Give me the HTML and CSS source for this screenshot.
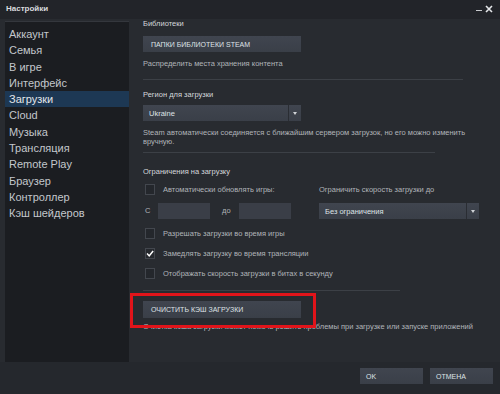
FILE: index.html
```html
<!DOCTYPE html>
<html lang="ru">
<head>
    <meta charset="UTF-8">
    <title>Настройки</title>
    <link rel="stylesheet" href="styles.css">
</head>
<body>

<div class="window">
    <div class="titleBar">
        <span class="title">Настройки</span>
        <div class="windowControls">
            <span class="minimize"></span>
            <svg class="close" width="8" height="8" viewBox="0 0 8 8">
                <path d="M1 1 L7 7 M7 1 L1 7" stroke="#e4e6e9" stroke-width="1.6"/>
            </svg>
        </div>
    </div>

    <div class="mainArea">
        <div class="sidebar">
            <div class="menuItem">Аккаунт</div>
            <div class="menuItem">Семья</div>
            <div class="menuItem">В игре</div>
            <div class="menuItem">Интерфейс</div>
            <div class="menuItem active">Загрузки</div>
            <div class="menuItem">Cloud</div>
            <div class="menuItem">Музыка</div>
            <div class="menuItem">Трансляция</div>
            <div class="menuItem">Remote Play</div>
            <div class="menuItem">Браузер</div>
            <div class="menuItem">Контроллер</div>
            <div class="menuItem">Кэш шейдеров</div>
        </div>

        <div class="panel">
            <p class="heading">Библиотеки</p>
            <button class="steamButton libButton">ПАПКИ БИБЛИОТЕКИ STEAM</button>
            <p class="note libNote">Распределить места хранения контента</p>
            <div class="separator sepWide"></div>

            <p class="heading regionHeading">Регион для загрузки</p>
            <div class="dropdown regionDrop">
                <span class="dropText">Ukraine</span>
                <span class="dropArrow"></span>
            </div>
            <p class="note regionNote">Steam автоматически соединяется с ближайшим сервером загрузок, но его можно изменить<br>вручную.</p>
            <div class="separator sepMid"></div>

            <p class="heading limitHeading">Ограничения на загрузку</p>
            <div class="limitRow">
                <div class="checkRow autoRow">
                    <span class="checkbox"></span>
                    <span class="note">Автоматически обновлять игры:</span>
                </div>
                <span class="note speedLabel">Ограничить скорость загрузки до</span>
            </div>
            <div class="limitRow timeRow">
                <span class="note fromLabel">С</span>
                <span class="timeInput"></span>
                <span class="note toLabel">до</span>
                <span class="timeInput"></span>
                <div class="dropdown speedDrop">
                    <span class="dropText">Без ограничения</span>
                    <span class="dropArrow"></span>
                </div>
            </div>
            <div class="checkRow firstCheck">
                <span class="checkbox"></span>
                <span class="note">Разрешать загрузки во время игры</span>
            </div>
            <div class="checkRow">
                <span class="checkbox checked">
                    <svg width="9" height="9" viewBox="0 0 9 9"><path d="M1.2 4.6 L3.6 7.2 L8 1.6" fill="none" stroke="#ffffff" stroke-width="1.7"/></svg>
                </span>
                <span class="note">Замедлять загрузку во время трансляции</span>
            </div>
            <div class="checkRow">
                <span class="checkbox"></span>
                <span class="note">Отображать скорость загрузки в битах в секунду</span>
            </div>
            <div class="separator sepShort"></div>

            <button class="steamButton cacheButton">ОЧИСТИТЬ КЭШ ЗАГРУЗКИ</button>
            <p class="note cacheNote">Очистка кэша загрузки может помочь решить проблемы при загрузке или запуске приложений</p>

            <div class="highlight"></div>
        </div>
    </div>

    <div class="footer">
        <button class="steamButton footerButton">OK</button>
        <button class="steamButton footerButton">ОТМЕНА</button>
    </div>
</div>

</body>
</html>
```

FILE: styles.css
```css
html, body {
    margin: 0;
    padding: 0;
}

body {
    width: 500px;
    height: 394px;
    overflow: hidden;
    font-family: "Liberation Sans", Arial, sans-serif;
    background-color: #26292e;
}

.window {
    width: 500px;
    height: 394px;
    display: flex;
    flex-direction: column;
    background-color: #282b30;
}

/* заголовок окна */
.titleBar {
    height: 19px;
    display: flex;
    align-items: center;
    justify-content: space-between;
    padding: 0 7px 2px 6px;
    box-sizing: border-box;
    background-color: #222429;
}
.title {
    color: #d9dbde;
    font-size: 8px;
    font-weight: bold;
}
.windowControls {
    display: flex;
    align-items: center;
    gap: 3px;
}
.minimize {
    width: 6px;
    height: 1px;
    margin-top: 4px;
    background-color: #c8cacd;
}

.mainArea {
    display: flex;
    height: 343px;
}

/* левое меню */
.sidebar {
    width: 124px;
    margin: 2px 0 0 5px;
    padding-top: 4px;
    box-sizing: border-box;
    background-color: #1b1d21;
    border-top: 1px solid #34373d;
}
.menuItem {
    height: 16.3px;
    line-height: 16.3px;
    padding-left: 4px;
    color: #c3c7cc;
    font-size: 11px;
}
.menuItem.active {
    background-color: #1d3854;
    color: #e2e6ea;
}

/* правая часть */
.panel {
    position: relative;
    flex: 1;
    padding: 0 0 0 14px;
}
.heading, .note {
    margin: 0;
    font-size: 7.5px;
    line-height: 10px;
}
.heading {
    color: #d5d8dc;
}
.note {
    color: #b0b4b9;
}

.steamButton {
    display: block;
    border: 0;
    padding: 0 0 0 8px;
    text-align: left;
    font-family: "Liberation Sans", Arial, sans-serif;
    font-size: 7px;
    color: #dfe2e6;
    background: linear-gradient(to bottom, #40454f, #3a3f48);
}

.libButton {
    width: 158px;
    height: 16px;
    margin-top: 7px;
}
.libNote {
    margin-top: 7px;
}

.separator {
    height: 1px;
    background-color: #3c4046;
}
.sepWide {
    width: 320px;
    margin-top: 10px;
}
.sepMid {
    width: 292px;
    margin-top: 6px;
}
.sepShort {
    width: 257px;
    margin-top: 11px;
}

.regionHeading {
    margin-top: 10px;
}

.dropdown {
    display: flex;
    align-items: center;
    height: 16px;
    background: linear-gradient(to bottom, #40454f, #3a3f48);
}
.dropText {
    flex: 1;
    padding-left: 6px;
    color: #dfe2e6;
    font-size: 7.5px;
}
.dropArrow {
    width: 12px;
    height: 16px;
    border-left: 1px solid #2a2d33;
    position: relative;
}
.dropArrow:after {
    content: "";
    position: absolute;
    left: 4px;
    top: 7px;
    border-left: 2.5px solid transparent;
    border-right: 2.5px solid transparent;
    border-top: 3px solid #d0d3d7;
}
.regionDrop {
    width: 158px;
    margin-top: 5px;
}
.regionNote {
    margin-top: 8px;
    line-height: 8.5px;
}

.limitHeading {
    margin-top: 14px;
}

.limitRow {
    display: flex;
    align-items: center;
}
.autoRow {
    width: 176px;
}
.limitHeading + .limitRow {
    margin-top: 7px;
}
.timeRow {
    margin-top: 8px;
}
.fromLabel {
    width: 13px;
    padding-left: 2px;
}
.toLabel {
    width: 17px;
    padding-left: 12px;
}
.timeInput {
    width: 52px;
    height: 16px;
    background-color: #3a3e47;
}
.speedDrop {
    width: 160px;
    margin-left: 28px;
}

.checkRow {
    display: flex;
    align-items: center;
    gap: 8px;
    margin-top: 9px;
}
.limitRow .checkRow {
    margin-top: 0;
}
.checkbox {
    width: 8px;
    height: 9px;
    margin-left: 2px;
    border: 1px solid #43474e;
    background-color: #24272c;
    display: flex;
    align-items: center;
    justify-content: center;
}
.checkbox.checked {
    background-color: #26292e;
}

.cacheButton {
    width: 158px;
    height: 17px;
    margin-top: 10px;
}
.cacheNote {
    margin-top: 4px;
}

/* красная рамка поверх кнопки */
.highlight {
    position: absolute;
    left: 1px;
    top: 274px;
    width: 180px;
    height: 29px;
    border: 3px solid #e1141a;
}

.footer {
    flex: 1;
    display: flex;
    justify-content: flex-end;
    align-items: flex-start;
    gap: 7px;
    padding: 6px 7px 0 0;
    background-color: #25282d;
}
.footerButton {
    width: 63px;
    height: 16px;
    padding-left: 6px;
}
```
